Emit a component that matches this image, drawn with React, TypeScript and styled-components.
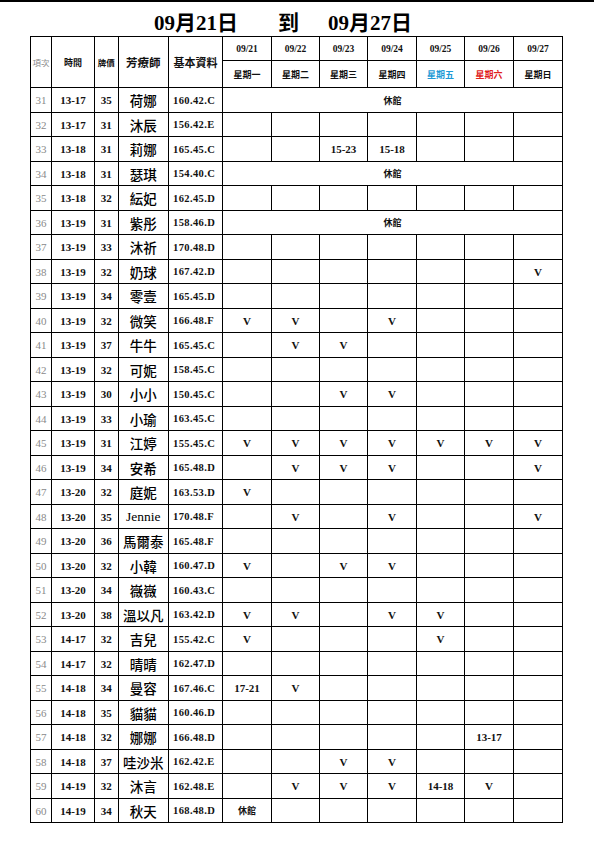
import React from 'react';
import styled, { createGlobalStyle } from 'styled-components';

const GlobalStyle = createGlobalStyle`
  html, body {
    margin: 0;
    padding: 0;
    background: #fff;
  }
  body {
    font-family: "Liberation Serif", "Noto Sans CJK TC", serif;
    color: #111;
  }
`;

const Page = styled.div`
  width: 594px;
  height: 841px;
  border-top: 2px solid #000;
  box-sizing: border-box;
  background: #fff;
`;

const Title = styled.div`
  display: flex;
  align-items: flex-end;
  height: 34px;
  padding-left: 154px;
  box-sizing: border-box;
  padding-bottom: 1px;
  font-family: "Liberation Serif", "Noto Sans CJK TC", serif;
  font-weight: 700;
  font-size: 21px;
  line-height: 24px;
  color: #000;
`;

const TitlePart = styled.span<{ $gap?: number }>`
  margin-right: ${({ $gap }) => $gap ?? 0}px;
`;

const Table = styled.table`
  margin-left: 30px;
  width: 532px;
  border-collapse: collapse;
  table-layout: fixed;
`;

const Cell = styled.td<{ $kind?: string; $color?: string }>`
  border: 1px solid #000;
  padding: 0;
  text-align: center;
  vertical-align: middle;
  white-space: nowrap;
  overflow: hidden;
  color: ${({ $color }) => $color ?? '#111'};
  font-family: "Liberation Serif", "Noto Sans CJK TC", serif;
  font-weight: 700;
  font-size: 11px;
  ${({ $kind }) =>
    $kind === 'idx' &&
    `
    color: #8a8a8a;
    font-weight: 400;
    font-size: 11px;
  `}
  ${({ $kind }) =>
    $kind === 'name' &&
    `
    font-size: 13.5px;
    font-weight: 500;
    color: #000;
  `}
  ${({ $kind }) =>
    $kind === 'info' &&
    `
    text-align: left;
    padding-left: 4px;
    font-size: 10.5px;
    letter-spacing: 0.4px;
  `}
  ${({ $kind }) =>
    $kind === 'small' &&
    `
    font-size: 9px;
  `}
`;

const HeadCell = styled(Cell)<{ $size?: number }>`
  font-size: ${({ $size }) => $size ?? 9.5}px;
`;

const Row = styled.tr<{ $h?: number }>`
  height: ${({ $h }) => $h ?? 24.5}px;
`;

const widths = [21, 43, 23.5, 50.5, 54, 49, 48, 48, 49, 48, 49, 49];

const days = [
  { date: '09/21', label: '星期一' },
  { date: '09/22', label: '星期二' },
  { date: '09/23', label: '星期三' },
  { date: '09/24', label: '星期四' },
  { date: '09/25', label: '星期五', color: '#1d9ad6' },
  { date: '09/26', label: '星期六', color: '#e0211c' },
  { date: '09/27', label: '星期日' },
];

type Entry = {
  no: number;
  time: string;
  price: string;
  name: string;
  info: string;
  closed?: boolean;
  marks?: string[];
};

const rows: Entry[] = [
  { no: 31, time: '13-17', price: '35', name: '荷娜', info: '160.42.C', closed: true },
  { no: 32, time: '13-17', price: '31', name: '沐辰', info: '156.42.E' },
  { no: 33, time: '13-18', price: '31', name: '莉娜', info: '165.45.C', marks: ['', '', '15-23', '15-18'] },
  { no: 34, time: '13-18', price: '31', name: '瑟琪', info: '154.40.C', closed: true },
  { no: 35, time: '13-18', price: '32', name: '紜妃', info: '162.45.D' },
  { no: 36, time: '13-19', price: '31', name: '紫彤', info: '158.46.D', closed: true },
  { no: 37, time: '13-19', price: '33', name: '沐祈', info: '170.48.D' },
  { no: 38, time: '13-19', price: '32', name: '奶球', info: '167.42.D', marks: ['', '', '', '', '', '', 'V'] },
  { no: 39, time: '13-19', price: '34', name: '零壹', info: '165.45.D' },
  { no: 40, time: '13-19', price: '32', name: '微笑', info: '166.48.F', marks: ['V', 'V', '', 'V'] },
  { no: 41, time: '13-19', price: '37', name: '牛牛', info: '165.45.C', marks: ['', 'V', 'V'] },
  { no: 42, time: '13-19', price: '32', name: '可妮', info: '158.45.C' },
  { no: 43, time: '13-19', price: '30', name: '小小', info: '150.45.C', marks: ['', '', 'V', 'V'] },
  { no: 44, time: '13-19', price: '33', name: '小瑜', info: '163.45.C' },
  { no: 45, time: '13-19', price: '31', name: '江婷', info: '155.45.C', marks: ['V', 'V', 'V', 'V', 'V', 'V', 'V'] },
  { no: 46, time: '13-19', price: '34', name: '安希', info: '165.48.D', marks: ['', 'V', 'V', 'V', '', '', 'V'] },
  { no: 47, time: '13-20', price: '32', name: '庭妮', info: '163.53.D', marks: ['V'] },
  { no: 48, time: '13-20', price: '35', name: 'Jennie', info: '170.48.F', marks: ['', 'V', '', 'V', '', '', 'V'] },
  { no: 49, time: '13-20', price: '36', name: '馬爾泰', info: '165.48.F' },
  { no: 50, time: '13-20', price: '32', name: '小韓', info: '160.47.D', marks: ['V', '', 'V', 'V'] },
  { no: 51, time: '13-20', price: '34', name: '嶶嶶', info: '160.43.C' },
  { no: 52, time: '13-20', price: '38', name: '溫以凡', info: '163.42.D', marks: ['V', 'V', '', 'V', 'V'] },
  { no: 53, time: '14-17', price: '32', name: '吉兒', info: '155.42.C', marks: ['V', '', '', '', 'V'] },
  { no: 54, time: '14-17', price: '32', name: '晴晴', info: '162.47.D' },
  { no: 55, time: '14-18', price: '34', name: '曼容', info: '167.46.C', marks: ['17-21', 'V'] },
  { no: 56, time: '14-18', price: '35', name: '貓貓', info: '160.46.D' },
  { no: 57, time: '14-18', price: '32', name: '娜娜', info: '166.48.D', marks: ['', '', '', '', '', '13-17'] },
  { no: 58, time: '14-18', price: '37', name: '哇沙米', info: '162.42.E', marks: ['', '', 'V', 'V'] },
  { no: 59, time: '14-19', price: '32', name: '沐言', info: '162.48.E', marks: ['', 'V', 'V', 'V', '14-18', 'V'] },
  { no: 60, time: '14-19', price: '34', name: '秋天', info: '168.48.D', marks: ['休館'] },
];

const App = () => (
  <Page>
    <GlobalStyle />
    <Title>
      <TitlePart $gap={40}>09月21日</TitlePart>
      <TitlePart $gap={29}>到</TitlePart>
      <TitlePart>09月27日</TitlePart>
    </Title>
    <Table>
      <colgroup>
        {widths.map((w, i) => (
          <col key={i} style={{ width: w }} />
        ))}
      </colgroup>
      <thead>
        <Row $h={24.3}>
          <HeadCell as="th" rowSpan={2} $kind="idx" $size={8.5}>
            項次
          </HeadCell>
          <HeadCell as="th" rowSpan={2} $size={9}>
            時間
          </HeadCell>
          <HeadCell as="th" rowSpan={2} $size={8.5}>
            牌價
          </HeadCell>
          <HeadCell as="th" rowSpan={2} $size={11.5}>
            芳療師
          </HeadCell>
          <HeadCell as="th" rowSpan={2} $size={11}>
            基本資料
          </HeadCell>
          {days.map((d) => (
            <HeadCell as="th" key={d.date} $size={9.5}>
              {d.date}
            </HeadCell>
          ))}
        </Row>
        <Row $h={27}>
          {days.map((d) => (
            <HeadCell as="th" key={d.label} $size={9} $color={d.color}>
              {d.label}
            </HeadCell>
          ))}
        </Row>
      </thead>
      <tbody>
        {rows.map((r) => (
          <Row key={r.no}>
            <Cell $kind="idx">{r.no}</Cell>
            <Cell>{r.time}</Cell>
            <Cell>{r.price}</Cell>
            <Cell $kind="name">{r.name}</Cell>
            <Cell $kind="info">{r.info}</Cell>
            {r.closed ? (
              <Cell colSpan={7} $kind="small">
                休館
              </Cell>
            ) : (
              days.map((d, i) => {
                const m = r.marks?.[i] ?? '';
                return (
                  <Cell key={d.date} $kind={m === '休館' ? 'small' : undefined}>
                    {m}
                  </Cell>
                );
              })
            )}
          </Row>
        ))}
      </tbody>
    </Table>
  </Page>
);

export default App;
